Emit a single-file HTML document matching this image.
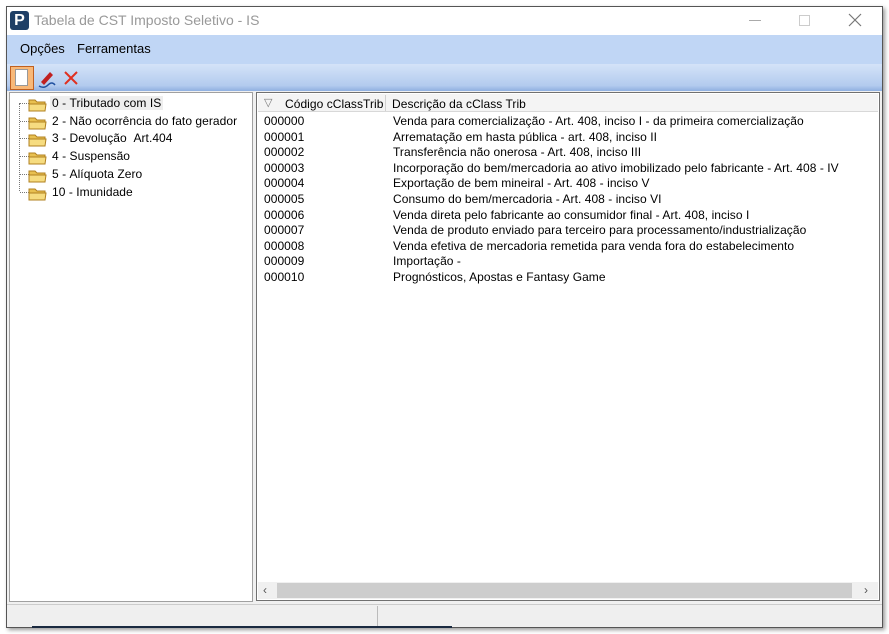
<!DOCTYPE html>
<html><head><meta charset="utf-8"><style>
*{margin:0;padding:0;box-sizing:border-box}
body{width:889px;height:634px;background:#fff;position:relative;overflow:hidden;font-family:"Liberation Sans",sans-serif;font-size:12px;color:#000}
.abs{position:absolute}
#win{left:6px;top:6px;width:877px;height:622px;border:1px solid #555;background:#f0f0f0;box-shadow:2px 2px 4px rgba(0,0,0,.4)}
.row{position:absolute;white-space:nowrap;letter-spacing:0.05px}
</style></head><body>
<div id="win" class="abs"></div>
<div class="abs" style="left:7px;top:7px;width:875px;height:28px;background:#fff"></div>
<div class="abs" style="left:10px;top:11px;width:19px;height:19px;background:#1f3f66;border-radius:3px;color:#fff;font-weight:bold;font-size:16px;line-height:19px;text-align:center">P</div>
<div class="abs" style="left:34px;top:12px;font-size:14px;color:#999">Tabela de CST Imposto Seletivo - IS</div>
<div class="abs" style="left:749px;top:20px;width:12px;height:1px;background:#aaa"></div>
<div class="abs" style="left:799px;top:15px;width:11px;height:11px;border:1px solid #ccc"></div>
<svg class="abs" style="left:848px;top:13px" width="14" height="14"><path d="M1 1L13 13M13 1L1 13" stroke="#777" stroke-width="1.2"/></svg>
<div class="abs" style="left:7px;top:35px;width:875px;height:29px;background:#c0d6f5"></div>
<div class="abs" style="left:20px;top:41px;font-size:13px">Opções</div>
<div class="abs" style="left:77px;top:41px;font-size:13px">Ferramentas</div>
<div class="abs" style="left:7px;top:64px;width:875px;height:27px;background:linear-gradient(#d4e3f8,#b3cbee 80%,#8fb0e0)"></div>
<div class="abs" style="left:10px;top:66px;width:24px;height:24px;background:#f8b878;border:1px solid #c06020"></div>
<div class="abs" style="left:15px;top:69px;width:13px;height:17px;background:#fff;border:1px solid #999"></div>
<svg class="abs" style="left:36px;top:67px" width="22" height="22"><path d="M5 15 L14 5 L17 8 L8 18 Z" fill="#c02020"/><path d="M3 19 Q8 22 12 18 T19 18" stroke="#2050a0" fill="none" stroke-width="1.5"/></svg>
<svg class="abs" style="left:62px;top:69px" width="18" height="18"><path d="M3 3L15 15M15 3L3 15" stroke="#e03020" stroke-width="2"/></svg>
<div class="abs" style="left:9px;top:92px;width:244px;height:510px;background:#fff;border:1px solid #a0a0a0"></div>
<div class="abs" style="left:19px;top:103px;width:1px;height:88px;border-left:1px dotted #777"></div>
<div id="tree"></div>
<div class="abs" style="left:256px;top:92px;width:624px;height:509px;background:#fff;border:1px solid #707070"></div>
<div class="abs" style="left:258px;top:94px;width:620px;height:18px;background:#f4f4f4;border-bottom:1px solid #d8d8d8"></div>
<div class="abs" style="left:385px;top:95px;width:1px;height:16px;background:#d0d0d0"></div>
<div class="abs" style="left:264px;top:96px;color:#777;font-size:11px">▽</div>
<div class="row" style="left:285px;top:97px">Código cClassTrib</div>
<div class="row" style="left:392px;top:97px">Descrição da cClass Trib</div>
<div id="list"></div>
<div class="abs" style="left:258px;top:582px;width:620px;height:17px;background:#f0f0f0"></div>
<div class="abs" style="left:277px;top:583px;width:575px;height:15px;background:#cdcdcd"></div>
<div class="abs" style="left:263px;top:583px;font-size:12px;color:#555">‹</div>
<div class="abs" style="left:864px;top:583px;font-size:12px;color:#555">›</div>
<div class="abs" style="left:7px;top:604px;width:875px;height:23px;background:#efefef;border-top:1px solid #ccc"></div>
<div class="abs" style="left:377px;top:606px;width:1px;height:21px;background:#bbb"></div>
<div class="abs" style="left:32px;top:626px;width:420px;height:2px;background:#1a2a40"></div>
<script>
var t=["0 - Tributado com IS","2 - Não ocorrência do fato gerador","3 - Devolução  Art.404","4 - Suspensão","5 - Alíquota Zero","10 - Imunidade"],h="";
t.forEach(function(s,i){var y=94+i*17.7;
h+='<div class="abs" style="left:20px;top:'+(y+9)+'px;width:9px;border-top:1px dotted #777"></div>';
h+='<svg class="abs" style="left:28px;top:'+(y+3)+'px" width="19" height="15"><path d="M1 3h6l2 2h8v9H1z" fill="#e8c050" stroke="#b08020"/><path d="M1 7h17l-1 7H1z" fill="#f6dc80" stroke="#b08020"/></svg>';
h+='<div class="row" style="left:52px;top:'+(y+2)+'px;'+(i==0?'background:#eee;padding:0 2px;margin-left:-2px':'')+'">'+s.replace(/ /g,'&nbsp;')+'</div>';});
document.getElementById('tree').innerHTML=h;
var d=["Venda para comercialização - Art. 408, inciso I - da primeira comercialização","Arrematação em hasta pública - art. 408, inciso II","Transferência não onerosa - Art. 408, inciso III","Incorporação do bem/mercadoria ao ativo imobilizado pelo fabricante - Art. 408 - IV","Exportação de bem mineiral - Art. 408 - inciso V","Consumo do bem/mercadoria - Art. 408 - inciso VI","Venda direta pelo fabricante ao consumidor final - Art. 408, inciso I","Venda de produto enviado para terceiro para processamento/industrialização","Venda efetiva de mercadoria remetida para venda fora do estabelecimento","Importação -","Prognósticos, Apostas e Fantasy Game"];h="";
d.forEach(function(s,i){var y=114+i*15.6;h+='<div class="row" style="left:264px;top:'+y+'px">0000'+(i<10?'0'+i:i)+'</div><div class="row" style="left:393px;top:'+y+'px">'+s+'</div>';});
document.getElementById('list').innerHTML=h;
</script>
</body></html>
